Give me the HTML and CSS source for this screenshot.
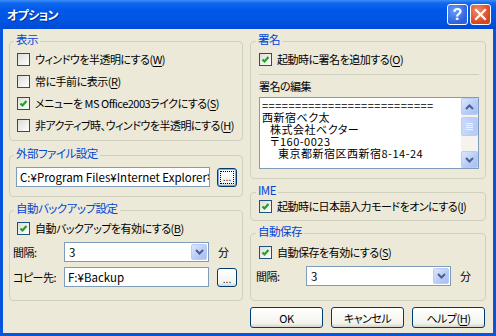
FILE: index.html
```html
<!DOCTYPE html>
<html lang="ja">
<head>
    <meta charset="UTF-8">
    <meta name="viewport" content="width=device-width, initial-scale=1.0">
    <title>オプション</title>
    <link rel="stylesheet" href="styles.css">
</head>
<body>
    <div class="window">
        <div class="titlebar">
            <span class="title">オプション</span>
            <span class="cap-btn help">?</span>
            <span class="cap-btn close">
                <svg width="13" height="13" viewBox="0 0 13 13"><path d="M2 2 L11 11 M11 2 L2 11" stroke="#fff" stroke-width="2.2" stroke-linecap="square"/></svg>
            </span>
        </div>

        <div class="client">
            <!-- left column -->
            <div class="col col-left">
                <div class="group grp-view">
                    <div class="group-title">表示</div>
                    <div class="check-row"><span class="box"></span><span>ウィンドウを半透明にする(<u>W</u>)</span></div>
                    <div class="check-row"><span class="box"></span><span>常に手前に表示(<u>R</u>)</span></div>
                    <div class="check-row"><span class="box"><svg width="11" height="11" viewBox="0 0 11 11"><path d="M2.5 5.5 L4.5 7.5 L8.5 3" fill="none" stroke="#21A121" stroke-width="2.2"/></svg></span><span>メニューを MS Office2003ライクにする(<u>S</u>)</span></div>
                    <div class="check-row"><span class="box"></span><span>非アクティブ時、ウィンドウを半透明にする(<u>H</u>)</span></div>
                </div>

                <div class="group grp-ext">
                    <div class="group-title">外部ファイル設定</div>
                    <div class="field-row first">
                        <div class="textbox wide">C:¥Program Files¥Internet Explorer¥iexplore.exe</div>
                        <span class="btn-dots focused"><span>...</span></span>
                    </div>
                </div>

                <div class="group grp-backup">
                    <div class="group-title">自動バックアップ設定</div>
                    <div class="check-row short"><span class="box"><svg width="11" height="11" viewBox="0 0 11 11"><path d="M2.5 5.5 L4.5 7.5 L8.5 3" fill="none" stroke="#21A121" stroke-width="2.2"/></svg></span><span>自動バックアップを有効にする(<u>B</u>)</span></div>
                    <div class="field-row">
                        <span class="field-label">間隔:</span>
                        <div class="combo">
                            <span class="combo-value">3</span>
                            <span class="drop"><svg width="9" height="6" viewBox="0 0 9 6"><path d="M1 1 L4.5 4.5 L8 1" fill="none" stroke="#4D6185" stroke-width="2"/></svg></span>
                        </div>
                        <span class="unit">分</span>
                    </div>
                    <div class="field-row">
                        <span class="field-label">コピー先:</span>
                        <div class="textbox">F:¥Backup</div>
                        <span class="btn-dots"><span>...</span></span>
                    </div>
                </div>
            </div>

            <!-- right column -->
            <div class="col col-right">
                <div class="group grp-sign">
                    <div class="group-title">署名</div>
                    <div class="check-row short"><span class="box"><svg width="11" height="11" viewBox="0 0 11 11"><path d="M2.5 5.5 L4.5 7.5 L8.5 3" fill="none" stroke="#21A121" stroke-width="2.2"/></svg></span><span>起動時に署名を追加する(<u>O</u>)</span></div>
                    <div class="separator"></div>
                    <div class="plain-label">署名の編集</div>
                    <div class="memo">
                        <div class="memo-text">
                            <div>==========================</div>
                            <div>西新宿ベク太</div>
                            <div class="ind1">株式会社ベクター</div>
                            <div class="ind1">〒160-0023</div>
                            <div class="ind2">東京都新宿区西新宿8-14-24</div>
                        </div>
                        <div class="scrollbar">
                            <span class="sb-btn"><svg width="9" height="6" viewBox="0 0 9 6"><path d="M1 5 L4.5 1.5 L8 5" fill="none" stroke="#4D6185" stroke-width="2"/></svg></span>
                            <span class="sb-thumb"><i></i><i></i><i></i><i></i></span>
                            <span class="sb-track"></span>
                            <span class="sb-btn"><svg width="9" height="6" viewBox="0 0 9 6"><path d="M1 1 L4.5 4.5 L8 1" fill="none" stroke="#4D6185" stroke-width="2"/></svg></span>
                        </div>
                    </div>
                </div>

                <div class="group grp-ime">
                    <div class="group-title">IME</div>
                    <div class="check-row short"><span class="box"><svg width="11" height="11" viewBox="0 0 11 11"><path d="M2.5 5.5 L4.5 7.5 L8.5 3" fill="none" stroke="#21A121" stroke-width="2.2"/></svg></span><span>起動時に日本語入力モードをオンにする(<u>I</u>)</span></div>
                </div>

                <div class="group grp-save">
                    <div class="group-title">自動保存</div>
                    <div class="check-row short"><span class="box"><svg width="11" height="11" viewBox="0 0 11 11"><path d="M2.5 5.5 L4.5 7.5 L8.5 3" fill="none" stroke="#21A121" stroke-width="2.2"/></svg></span><span>自動保存を有効にする(<u>S</u>)</span></div>
                    <div class="field-row">
                        <span class="field-label">間隔:</span>
                        <div class="combo">
                            <span class="combo-value">3</span>
                            <span class="drop"><svg width="9" height="6" viewBox="0 0 9 6"><path d="M1 1 L4.5 4.5 L8 1" fill="none" stroke="#4D6185" stroke-width="2"/></svg></span>
                        </div>
                        <span class="unit">分</span>
                    </div>
                </div>

                <div class="buttons">
                    <span class="btn">OK</span>
                    <span class="btn">キャンセル</span>
                    <span class="btn">ヘルプ(<u>H</u>)</span>
                </div>
            </div>
        </div>
    </div>
</body>
</html>
```

FILE: styles.css
```css
* {
    box-sizing: border-box;
}

body {
    margin: 0;
    font-family: "Noto Sans CJK JP", "Liberation Sans", sans-serif;
    font-size: 11px;
    letter-spacing: -0.5px;
    font-feature-settings: "palt";
    color: #000;
    background: #fff;
}

u {
    text-decoration-thickness: 1px;
    text-underline-offset: 2px;
}

/* window frame */
.window {
    width: 496px;
    height: 336px;
    display: flex;
    flex-direction: column;
    background: #0855DD;
}

.titlebar {
    height: 29px;
    flex: none;
    display: flex;
    align-items: center;
    padding: 0 5px 0 7px;
    background: linear-gradient(#3D8EF8 0, #1068EE 3px, #0058EA 10px, #0055E5 20px, #0049D6 29px);
}

.title {
    flex: 1;
    color: #fff;
    font-weight: bold;
    font-size: 12px;
    letter-spacing: -0.7px;
    text-shadow: 1px 1px 0 #0A2A8A;
}

.cap-btn {
    width: 21px;
    height: 21px;
    margin-left: 2px;
    border: 1px solid #fff;
    border-radius: 3px;
    display: flex;
    align-items: center;
    justify-content: center;
}

.help {
    background: radial-gradient(circle at 35% 30%, #6A9CF6, #2A63E0 70%);
    color: #fff;
    font: bold 16px "Liberation Sans", sans-serif;
    letter-spacing: 0;
}

.close {
    background: radial-gradient(circle at 35% 30%, #F08A6A, #D8461F 70%);
}

.client {
    flex: 1;
    margin: 0 3px 3px;
    background: #ECE9D8;
    display: flex;
    gap: 7px;
    padding: 12px 7px 0 6px;
}

.col {
    display: flex;
    flex-direction: column;
}

.col-left {
    width: 234px;
}

.col-right {
    width: 236px;
}

/* group boxes */
.group {
    border: 1px solid #D0D0BF;
    border-radius: 4px;
    padding: 0 5px 0 7px;
    flex: none;
}

.col-right .group {
    padding: 0 6px 0 8px;
}

.group-title {
    display: table;
    margin: -10px 0 0 -3px;
    padding: 0 2px;
    line-height: 14px;
    font-size: 11.5px;
    background: #ECE9D8;
    color: #0046D5;
}

.grp-view { height: 100px; }
.grp-view .group-title { margin-bottom: 2px; }

.grp-ext { height: 42px; margin-top: 14px; }
.grp-backup { height: 91px; margin-top: 13px; }

.grp-sign { height: 138px; }
.grp-ime { height: 29px; margin-top: 13px; }
.grp-save { height: 68px; margin-top: 12px; }

/* checkboxes */
.check-row {
    display: flex;
    align-items: center;
    height: 22px;
    white-space: nowrap;
}

.check-row.short {
    height: 20px;
    margin-top: 3px;
}

.grp-ime .check-row.short {
    height: 18px;
    margin-top: 0;
}

.grp-save .check-row.short {
    height: 18px;
    margin-top: 5px;
}

.box {
    width: 13px;
    height: 13px;
    flex: none;
    margin-right: 5px;
    border: 1px solid #1C5180;
    background: linear-gradient(135deg, #DCDCD7, #FFFFFF);
    display: flex;
}

/* fields */
.field-row {
    display: flex;
    align-items: center;
    height: 20px;
    margin-top: 4px;
    margin-left: -4px;
}

.field-row + .field-row {
    margin-top: 5px;
}

.field-row.first {
    margin-top: 7px;
    margin-left: -1px;
}

.grp-save .field-row {
    margin-top: 5px;
    margin-left: -3px;
}

.field-label {
    width: 51px;
    flex: none;
    white-space: nowrap;
}

.grp-save .field-label {
    width: 50px;
}

.textbox {
    width: 145px;
    height: 20px;
    border: 1px solid #7F9DB9;
    background: #fff;
    padding: 0 3px;
    font-size: 11.5px;
    letter-spacing: 0;
    line-height: 18px;
    white-space: nowrap;
    overflow: hidden;
}

.textbox.wide {
    width: 194px;
}

.combo {
    width: 145px;
    height: 20px;
    border: 1px solid #7F9DB9;
    background: #fff;
    display: flex;
    align-items: center;
    padding: 1px;
}

.combo-value {
    flex: 1;
    padding-left: 3px;
    font-size: 11.5px;
}

.drop, .sb-btn {
    width: 16px;
    height: 100%;
    border: 1px solid #B9CCF5;
    border-radius: 2px;
    background: linear-gradient(135deg, #DCE7FD, #B7CBF8 60%, #A8BFF4);
    display: flex;
    align-items: center;
    justify-content: center;
}

.unit {
    margin-left: 9px;
}

.btn-dots {
    width: 20px;
    height: 19px;
    margin-left: 8px;
    border: 1px solid #003C74;
    border-radius: 3px;
    background: linear-gradient(#FFFFFF, #F3F3EE 80%, #D8D4C8);
    display: flex;
    align-items: flex-end;
    justify-content: center;
    font-family: "Liberation Sans", sans-serif;
    font-size: 10px;
    letter-spacing: 0;
    line-height: 12px;
}

.btn-dots.focused {
    margin-left: 7px;
    box-shadow: inset 0 0 0 1px #7FA4E8;
    padding: 0 0 1px;
}

.btn-dots.focused span {
    border: 1px dotted #000;
    width: 14px;
    height: 13px;
    margin-bottom: 1px;
    text-align: center;
}

/* signature */
.separator {
    height: 1px;
    margin-top: 5px;
    background: #D0D0BF;
}

.plain-label {
    margin-top: 4px;
    line-height: 14px;
}

.memo {
    margin-top: 4px;
    height: 72px;
    border: 1px solid #7F9DB9;
    background: #fff;
    display: flex;
}

.memo-text {
    flex: 1;
    padding: 1px 0 0 2px;
    font-size: 11px;
    letter-spacing: 0.5px;
    line-height: 12px;
    white-space: nowrap;
    overflow: hidden;
}

.ind1 { padding-left: 8px; }
.ind2 { padding-left: 16px; }

.scrollbar {
    width: 17px;
    display: flex;
    flex-direction: column;
    background: #F4F3EE;
}

.sb-btn {
    height: 17px;
    width: 17px;
    flex: none;
}

.sb-thumb {
    height: 19px;
    margin-top: 2px;
    border: 1px solid #B9CCF5;
    border-radius: 2px;
    background: linear-gradient(90deg, #C9D8FC, #B7CBF8);
    display: flex;
    flex-direction: column;
    align-items: center;
    justify-content: center;
    gap: 1px;
}

.sb-thumb i {
    width: 7px;
    height: 1px;
    background: #EEF4FE;
}

.sb-track {
    flex: 1;
}

/* dialog buttons */
.buttons {
    display: flex;
    gap: 8px;
    margin-top: 6px;
}

.btn {
    width: 73px;
    height: 21px;
    border: 1px solid #003C74;
    border-radius: 3px;
    background: linear-gradient(#FFFFFF, #F3F3EE 80%, #D8D4C8);
    display: flex;
    align-items: center;
    justify-content: center;
    white-space: nowrap;
}
```
